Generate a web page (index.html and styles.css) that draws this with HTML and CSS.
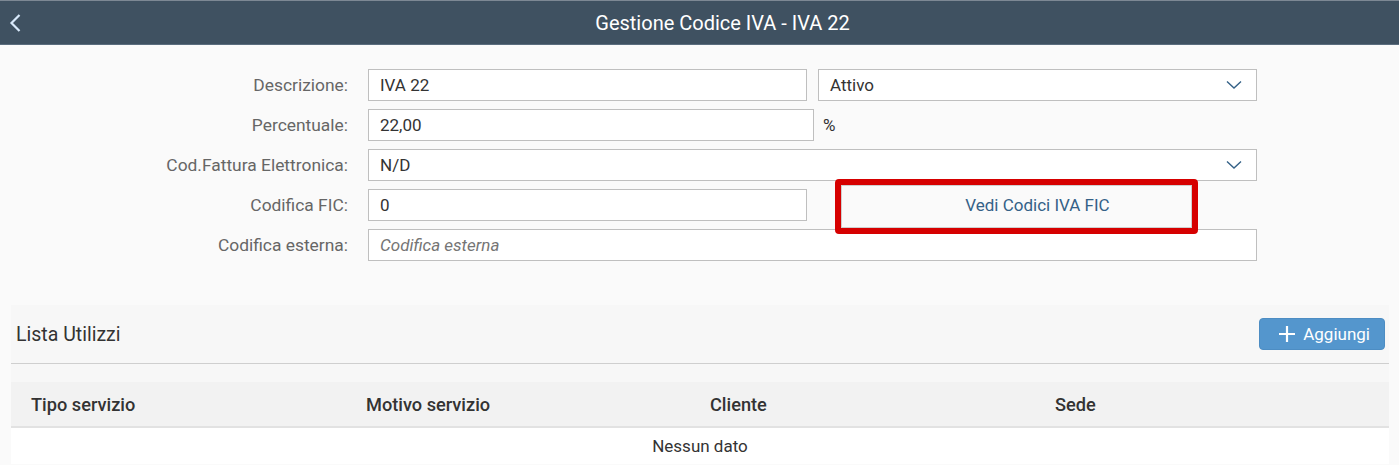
FILE: index.html
```html
<!DOCTYPE html>
<html lang="it">
<head>
<meta charset="UTF-8">
<meta name="viewport" content="width=device-width, initial-scale=1.0">
<title>Gestione Codice IVA - IVA 22</title>
<link rel="stylesheet" href="styles.css">
</head>
<body>
<header class="shell-bar">
    <button class="back-btn" aria-label="Indietro">
        <svg width="14" height="20" viewBox="0 0 14 20"><path d="M11.5 2 L3.5 10 L11.5 18" fill="none" stroke="#d8e9fb" stroke-width="2.2"/></svg>
    </button>
    <h1 class="shell-title">Gestione Codice IVA - IVA 22</h1>
</header>

<div class="form">
    <label class="form-label">Descrizione:</label>
    <div class="field-row halves">
        <input class="text-input" type="text" value="IVA 22">
        <div class="select">
            <span>Attivo</span>
            <svg class="chevron" width="16" height="10" viewBox="0 0 16 10"><path d="M1 1.5 L8 8 L15 1.5" fill="none" stroke="#346187" stroke-width="1.4"/></svg>
        </div>
    </div>

    <label class="form-label">Percentuale:</label>
    <div class="field-row">
        <input class="text-input pct" type="text" value="22,00">
        <span class="unit">%</span>
    </div>

    <label class="form-label">Cod.Fattura Elettronica:</label>
    <div class="field-row">
        <div class="select wide">
            <span>N/D</span>
            <svg class="chevron" width="16" height="10" viewBox="0 0 16 10"><path d="M1 1.5 L8 8 L15 1.5" fill="none" stroke="#346187" stroke-width="1.4"/></svg>
        </div>
    </div>

    <label class="form-label">Codifica FIC:</label>
    <div class="field-row halves">
        <input class="text-input" type="text" value="0">
        <div class="btn-cell">
            <button class="link-btn">Vedi Codici IVA FIC</button>
            <div class="highlight"></div>
        </div>
    </div>

    <label class="form-label">Codifica esterna:</label>
    <div class="field-row">
        <input class="text-input wide" type="text" placeholder="Codifica esterna">
    </div>
</div>

<section class="panel">
    <div class="toolbar">
        <h2 class="toolbar-title">Lista Utilizzi</h2>
        <button class="add-btn">
            <svg width="18" height="18" viewBox="0 0 18 18"><path d="M9 1 V17 M1 9 H17" stroke="#fff" stroke-width="2.2"/></svg>
            Aggiungi
        </button>
    </div>
    <table class="list">
        <colgroup>
            <col class="col-tipo">
            <col class="col-motivo">
            <col class="col-cliente">
            <col>
        </colgroup>
        <thead>
            <tr>
                <th>Tipo servizio</th>
                <th>Motivo servizio</th>
                <th>Cliente</th>
                <th>Sede</th>
            </tr>
        </thead>
        <tbody>
            <tr><td class="empty" colspan="4">Nessun dato</td></tr>
        </tbody>
    </table>
</section>
</body>
</html>
```

FILE: styles.css
```css
body {
    margin: 0;
    background-color: #fafafa;
    font-family: Roboto, "Liberation Sans", Arial, sans-serif;
    font-size: 17px;
    color: #333;
}

.shell-bar {
    height: 43px;
    background-color: #3f5161;
    border-top: 1px solid #7d8894;
    border-bottom: 1px solid #5b6d7e;
    display: flex;
    align-items: center;
    box-sizing: content-box;
}

.back-btn {
    background: none;
    border: none;
    width: 32px;
    height: 40px;
    padding: 0 0 0 8px;
    display: flex;
    align-items: center;
    cursor: pointer;
}

.shell-title {
    flex: 1;
    margin: 0 0 0 14px;
    text-align: center;
    font-size: 20px;
    font-weight: normal;
    color: #fff;
}

.form {
    display: grid;
    grid-template-columns: 348px 889px;
    column-gap: 20px;
    row-gap: 8px;
    padding-top: 24px;
    align-items: center;
}

.form-label {
    text-align: right;
    color: #666;
    font-size: 17.4px;
}

.field-row {
    display: flex;
    align-items: center;
    height: 32px;
}

.halves {
    display: grid;
    grid-template-columns: 1fr 1fr;
    column-gap: 11px;
}

.text-input,
.select {
    height: 32px;
    box-sizing: border-box;
    border: 1px solid #bfbfbf;
    background-color: #fff;
    font-family: inherit;
    font-size: 17px;
    color: #333;
    padding: 0 11px;
    width: 100%;
}

.text-input::placeholder {
    color: #757575;
    font-style: italic;
}

.text-input.pct {
    width: 446px;
}

.unit {
    margin-left: 9px;
}

.select {
    display: flex;
    align-items: center;
    justify-content: space-between;
    padding-right: 14px;
}

.btn-cell {
    position: relative;
    height: 32px;
}

.link-btn {
    width: 100%;
    height: 32px;
    border: none;
    background: none;
    font-family: inherit;
    font-size: 17px;
    color: #346187;
    cursor: pointer;
}

.highlight {
    position: absolute;
    left: 17px;
    top: -10px;
    width: 363px;
    height: 55px;
    box-sizing: border-box;
    border: 6px solid #d60000;
    border-radius: 4px;
    box-shadow: inset 0 0 0 1px #cfcfcf;
    pointer-events: none;
}

.panel {
    margin: 44px 10px 0 11px;
    background-color: #f7f7f7;
}

.toolbar {
    height: 58px;
    border-bottom: 1px solid #cfcfcf;
    display: flex;
    align-items: center;
    justify-content: space-between;
    padding: 0 4px 0 5px;
}

.toolbar-title {
    margin: 0;
    font-size: 19.5px;
    font-weight: normal;
    color: #333;
}

.add-btn {
    display: flex;
    align-items: center;
    gap: 7px;
    height: 32px;
    padding: 0 14px 0 18px;
    background-color: #5496cd;
    border: 1px solid #4d8dc3;
    border-radius: 4px;
    color: #fff;
    font-family: inherit;
    font-size: 17px;
    cursor: pointer;
}

.list {
    width: 100%;
    margin-top: 18px;
    border-collapse: collapse;
    table-layout: fixed;
}

.col-tipo {
    width: 335px;
}

.col-motivo {
    width: 344px;
}

.col-cliente {
    width: 345px;
}

.list th {
    height: 44px;
    padding: 0 20px;
    text-align: left;
    font-size: 18.2px;
    font-weight: 500;
    background-color: #f2f2f2;
    border-bottom: 2px solid #e2e2e2;
}

.list td.empty {
    height: 36px;
    text-align: center;
    background-color: #fff;
    padding: 0;
}
```
